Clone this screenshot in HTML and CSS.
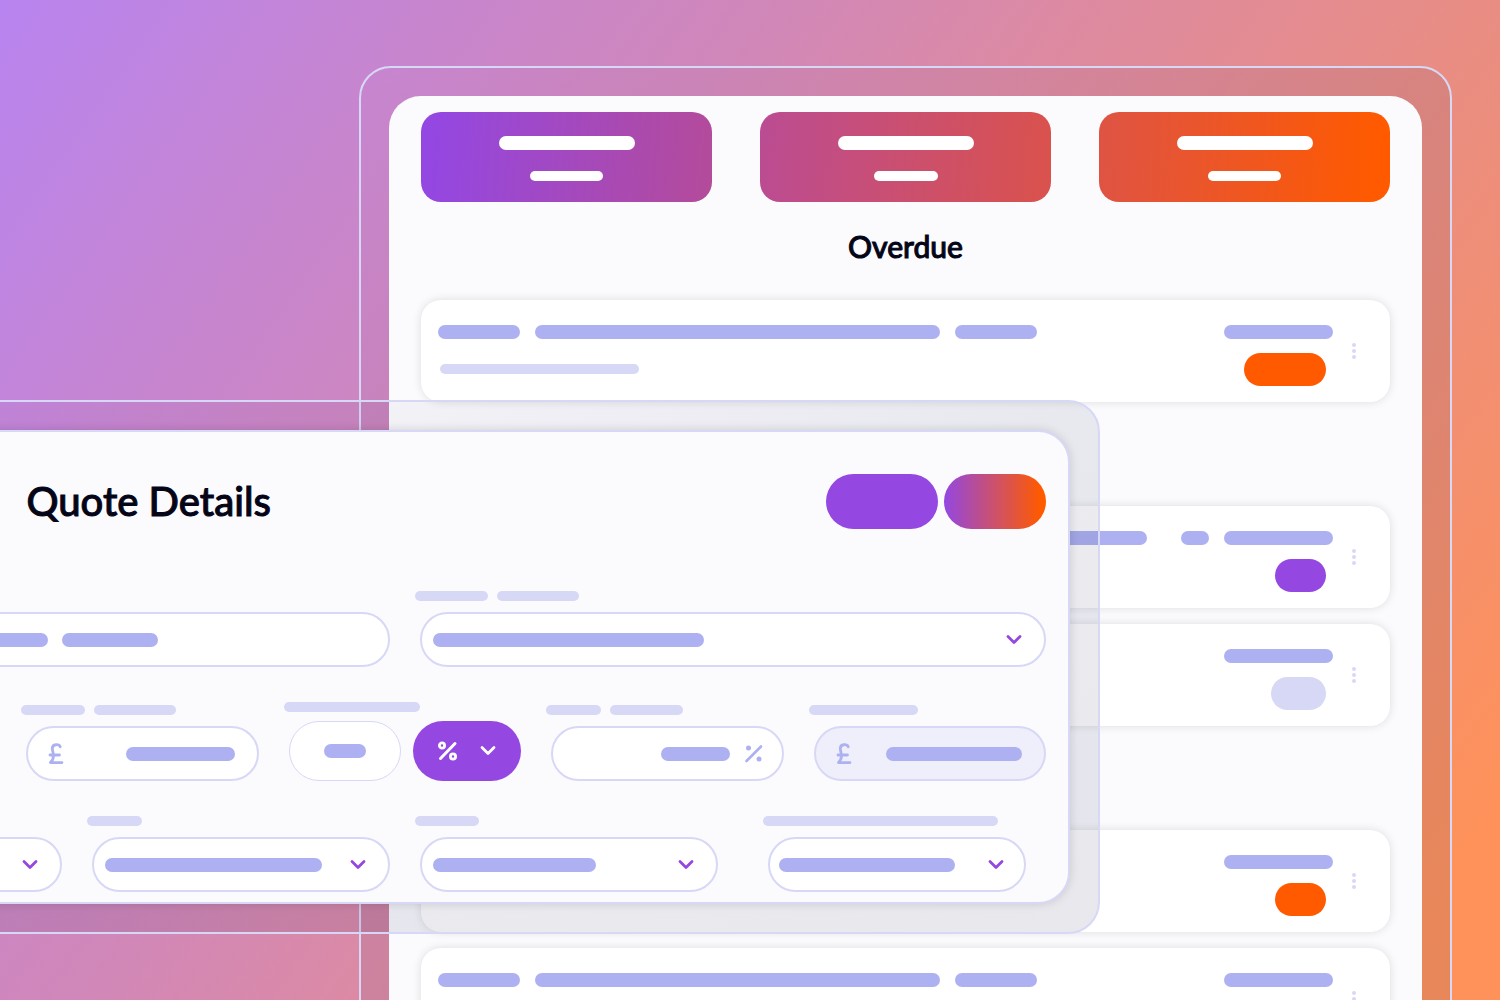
FILE: index.html
```html
<!DOCTYPE html>
<html lang="en">
<head>
<meta charset="utf-8">
<meta name="viewport" content="width=device-width, initial-scale=1">
<title>Quotes</title>
<link rel="stylesheet" href="styles.css">
</head>
<body>
<svg class="sprite" aria-hidden="true">
  <symbol id="chevron" viewBox="0 0 16 16"><path d="M2 4.500 8 10.500 14 4.500" fill="none" stroke="currentColor" stroke-width="2.800" stroke-linecap="round" stroke-linejoin="round"/></symbol>
  <symbol id="pound" viewBox="0 0 16 22"><path d="M12.200 3.700C11 1 4.300 0.600 4.300 5.600c0 2.500 1.200 4 1.200 7 0 3-1 5-3 7H14M2 12H11.500" fill="none" stroke="currentColor" stroke-width="2.800" stroke-linecap="round" stroke-linejoin="round"/></symbol>
  <symbol id="percent" viewBox="0 0 20 20"><path d="M2.500 17 17 2.500" stroke="currentColor" stroke-width="2.600" stroke-linecap="round"/><circle cx="4.500" cy="4" r="2.500" fill="currentColor"/><circle cx="15" cy="15" r="2.500" fill="currentColor"/></symbol>
  <symbol id="percent-bold" viewBox="0 0 20 20"><path d="M2.500 17.500 17 2.500" stroke="currentColor" stroke-width="3" stroke-linecap="round"/><g fill="none" stroke="currentColor" stroke-width="2.800"><circle cx="4" cy="4.500" r="2.600"/><circle cx="15" cy="15.500" r="2.600"/></g></symbol>
  <symbol id="kebab" viewBox="0 0 4 16"><g fill="currentColor"><circle cx="2" cy="2" r="2"/><circle cx="2" cy="8" r="2"/><circle cx="2" cy="14" r="2"/></g></symbol>
</svg>

<main class="desktop">
  <section class="frame frame-list">
    <div class="panel panel-list">
      <div class="stats">
        <div class="stat stat-a"><span class="bar w136"></span><span class="bar thin w73"></span></div>
        <div class="stat stat-b"><span class="bar w136"></span><span class="bar thin w64"></span></div>
        <div class="stat stat-c"><span class="bar w136"></span><span class="bar thin w73"></span></div>
      </div>
      <h2 class="list-title">Overdue</h2>
      <div class="group">
        <article class="card">
          <div class="card-main">
            <div class="line"><span class="bar w82"></span><span class="bar w405"></span><span class="bar w82"></span></div>
            <span class="bar thin soft w199 sub"></span>
          </div>
          <div class="card-side"><span class="bar w109"></span><span class="pill orange w82"></span></div>
          <button class="more" aria-label="More"><svg class="dots"><use href="#kebab"/></svg></button>
        </article>
      </div>
      <div class="group">
        <article class="card">
          <div class="card-main wide">
            <div class="line"><span class="bar w82"></span><span class="bar grow"></span></div>
          </div>
          <div class="card-side"><div class="line"><span class="bar w28"></span><span class="bar w109"></span></div><span class="pill purple w51"></span></div>
          <button class="more" aria-label="More"><svg class="dots"><use href="#kebab"/></svg></button>
        </article>
        <article class="card">
          <div class="card-main"><div class="line"><span class="bar w82"></span><span class="bar w405"></span></div></div>
          <div class="card-side"><span class="bar w109"></span><span class="pill soft w55"></span></div>
          <button class="more" aria-label="More"><svg class="dots"><use href="#kebab"/></svg></button>
        </article>
      </div>
      <div class="group">
        <article class="card">
          <div class="card-main"><div class="line"><span class="bar w82"></span><span class="bar w405"></span></div></div>
          <div class="card-side"><span class="bar w109"></span><span class="pill orange w51"></span></div>
          <button class="more" aria-label="More"><svg class="dots"><use href="#kebab"/></svg></button>
        </article>
        <article class="card">
          <div class="card-main">
            <div class="line"><span class="bar w82"></span><span class="bar w405"></span><span class="bar w82"></span></div>
            <span class="bar thin soft w199 sub"></span>
          </div>
          <div class="card-side"><span class="bar w109"></span><span class="pill orange w82"></span></div>
          <button class="more" aria-label="More"><svg class="dots"><use href="#kebab"/></svg></button>
        </article>
      </div>
    </div>
  </section>

  <section class="frame frame-quote">
    <form class="panel panel-quote">
      <header class="row cols-5 quote-head">
        <h1 class="quote-title">Quote Details</h1>
        <div class="actions">
          <button type="button" class="action action-solid" aria-label="Preview"></button>
          <button type="button" class="action action-blend" aria-label="Save"></button>
        </div>
      </header>

      <div class="row cols-2">
        <div class="field">
          <label class="caption" for="customer"><span class="bar thin soft w73"></span></label>
          <div class="box">
            <input class="control" id="customer">
            <span class="inside"><span class="bar w271"></span><span class="bar w96"></span></span>
          </div>
        </div>
        <div class="field">
          <label class="caption" for="site"><span class="bar thin soft w73"></span><span class="bar thin soft w82"></span></label>
          <div class="box">
            <select class="control" id="site"></select>
            <span class="inside"><span class="bar w271"></span><svg class="chevron end"><use href="#chevron"/></svg></span>
          </div>
        </div>
      </div>

      <div class="row cols-5">
        <div class="field">
          <label class="caption" for="quantity"><span class="bar thin soft w64"></span></label>
          <div class="box"><input class="control" id="quantity"></div>
        </div>
        <div class="field">
          <label class="caption" for="price"><span class="bar thin soft w64"></span><span class="bar thin soft w82"></span></label>
          <div class="box">
            <input class="control" id="price">
            <span class="inside money"><svg class="pound"><use href="#pound"/></svg><span class="bar w109 end"></span></span>
          </div>
        </div>
        <div class="field field-tall">
          <label class="caption" for="discount"><span class="bar thin soft w136"></span></label>
          <div class="pair">
            <div class="box">
              <input class="control control-tall" id="discount">
              <span class="inside centre"><span class="bar w42"></span></span>
            </div>
            <button type="button" class="unit" aria-label="Discount unit"><svg class="percent"><use href="#percent-bold"/></svg><svg class="chevron"><use href="#chevron"/></svg></button>
          </div>
        </div>
        <div class="field">
          <label class="caption" for="tax"><span class="bar thin soft w55"></span><span class="bar thin soft w73"></span></label>
          <div class="box">
            <input class="control" id="tax">
            <span class="inside rate"><span class="bar w69 end"></span><svg class="percent"><use href="#percent"/></svg></span>
          </div>
        </div>
        <div class="field">
          <label class="caption" for="total"><span class="bar thin soft w109"></span></label>
          <div class="box">
            <input class="control control-locked" id="total" readonly>
            <span class="inside money"><svg class="pound"><use href="#pound"/></svg><span class="bar w136 end"></span></span>
          </div>
        </div>
      </div>

      <div class="row cols-4">
        <div class="field">
          <label class="caption" for="status"><span class="bar thin soft w73"></span></label>
          <div class="box">
            <select class="control" id="status"></select>
            <span class="inside"><span class="bar w109"></span><svg class="chevron end"><use href="#chevron"/></svg></span>
          </div>
        </div>
        <div class="field">
          <label class="caption" for="owner"><span class="bar thin soft w55"></span></label>
          <div class="box">
            <select class="control" id="owner"></select>
            <span class="inside"><span class="bar w217"></span><svg class="chevron end"><use href="#chevron"/></svg></span>
          </div>
        </div>
        <div class="field">
          <label class="caption" for="terms"><span class="bar thin soft w64"></span></label>
          <div class="box">
            <select class="control" id="terms"></select>
            <span class="inside"><span class="bar w163"></span><svg class="chevron end"><use href="#chevron"/></svg></span>
          </div>
        </div>
        <div class="field field-inset">
          <label class="caption" for="template"><span class="bar thin soft w235"></span></label>
          <div class="box">
            <select class="control" id="template"></select>
            <span class="inside snug"><span class="bar w176"></span><svg class="chevron end"><use href="#chevron"/></svg></span>
          </div>
        </div>
      </div>
    </form>
  </section>
</main>
</body>
</html>
```
FILE: styles.css
```css
:root {
  --purple: #9447e1;
  --orange: #ff5a00;
  --bar: #aeb1f1;
  --soft: #d7d8f6;
  --surface: #fbfbfe;
  --ink: #040517;
}

* { box-sizing: border-box; }

body {
  margin: 0;
  font-family: Lato, "Open Sans", sans-serif;
  color: var(--ink);
}

button, input, select { font: inherit; margin: 0; padding: 0; }
button { border: 0; background: none; }
svg { display: block; flex: none; }
.sprite { position: absolute; width: 0; height: 0; }

.desktop {
  position: relative;
  height: 100vh;
  overflow: hidden;
  background: linear-gradient(125deg, #b884f0 0%, #c685d1 18%, #d087b9 35%, #dc8aa4 48%, #e98d83 68%, #ff925a 94%);
}

/* Windows */
.frame {
  position: absolute;
  padding: 28px;
  border: 2px solid var(--soft);
  border-radius: 32px;
  background: linear-gradient(to bottom right, rgba(40, 40, 90, 0), rgba(40, 40, 90, 0.09) 50%, rgba(40, 40, 90, 0.11));
}
.frame-list { top: 66px; left: 359px; right: 48px; }
.frame-quote { top: 400px; left: -290px; right: 400px; }

.panel { background: var(--surface); }
.panel-list { padding: 16px 32px; border-radius: 32px; }
.panel-quote {
  padding: 42px 22px 10px;
  border: 2px solid var(--soft);
  border-radius: 32px;
  box-shadow: 0 0 10px rgba(0, 0, 0, 0.14);
}

/* Placeholder bars */
.bar {
  display: block;
  height: 14px;
  border-radius: 7px;
  background: var(--bar);
}
.thin { height: 10px; border-radius: 5px; }
.soft { background: var(--soft); }
.grow { flex: 1; }
.w28 { width: 28px; }
.w42 { width: 42px; }
.w51 { width: 51px; }
.w55 { width: 55px; }
.w64 { width: 64px; }
.w69 { width: 69px; }
.w73 { width: 73px; }
.w82 { width: 82px; }
.w96 { width: 96px; }
.w109 { width: 109px; }
.w136 { width: 136px; }
.w163 { width: 163px; }
.w176 { width: 176px; }
.w199 { width: 199px; }
.w217 { width: 217px; }
.w235 { width: 235px; }
.w271 { width: 271px; }
.w405 { width: 405px; }

/* Summary tiles */
.stats { display: grid; grid-template-columns: repeat(3, 1fr); gap: 48px; }
.stat {
  display: flex;
  flex-direction: column;
  align-items: center;
  gap: 21px;
  height: 90px;
  padding-top: 24px;
  border-radius: 20px;
}
.stat .bar { background: #fff; }
.stat-a { background: linear-gradient(94deg, #9447e1 5%, #b44b9a); }
.stat-b { background: linear-gradient(94deg, #bb4c93, #da524c); }
.stat-c { background: linear-gradient(94deg, #de5344, #ff5a00 95%); }

.list-title, .quote-title {
  margin: 0;
  font-weight: 500;
  -webkit-text-stroke: 1px currentColor;
}
.list-title {
  height: 98px;
  font-size: 30px;
  line-height: 88px;
  text-align: center;
}

/* List cards */
.group { display: grid; gap: 16px; }
.group + .group { margin-top: 104px; }
.card {
  display: flex;
  align-items: flex-start;
  height: 102px;
  padding: 25px 29px 16px 17px;
  border-radius: 20px;
  background: #fff;
  box-shadow: 0 0 10px rgba(0, 0, 0, 0.12);
}
.card-main { flex: 1; }
.wide { margin-right: 34px; }
.line { display: flex; gap: 15px; }
.sub { margin: 25px 0 0 2px; }
.card-side { display: flex; flex-direction: column; align-items: flex-end; gap: 14px; }
.pill { height: 33px; margin-right: 7px; border-radius: 17px; }
.orange { background: var(--orange); }
.purple { background: var(--purple); }
.more { margin: 14px 0 0 14px; padding: 4px 5px; color: var(--soft); }
.dots { width: 4px; height: 16px; }

/* Quote form */
.row { display: grid; column-gap: 30px; align-items: end; margin-bottom: 35px; }
.row:last-child { margin-bottom: 0; }
.cols-2 { grid-template-columns: repeat(2, 1fr); }
.cols-4 { grid-template-columns: repeat(4, 1fr); }
.cols-5 { grid-template-columns: repeat(5, 1fr); }

.quote-head { align-items: center; margin-bottom: 62px; }
.quote-title {
  grid-column: 2 / 4;
  font-size: 40px;
  line-height: 55px;
}
.actions { grid-column: 4 / 6; display: flex; justify-content: flex-end; gap: 6px; }
.action { height: 55px; border-radius: 28px; }
.action-solid { width: 112px; background: var(--purple); }
.action-blend { width: 102px; background: linear-gradient(90deg, var(--purple), var(--orange) 95%); }

.caption { display: flex; gap: 9px; margin: 0 0 11px -5px; }
.field-tall .caption { margin-bottom: 9px; }
.field-inset { margin: 0 20px; }

.box { display: grid; flex: 1; }
.box > * { grid-area: 1 / 1; min-width: 0; }
.control {
  width: 100%;
  height: 55px;
  border: 2px solid var(--soft);
  border-radius: 28px;
  background: #fff;
  appearance: none;
}
.control-tall { height: 60px; border-width: 1px; border-radius: 30px; }
.control-locked { background: #efeffb; }
.inside {
  display: flex;
  align-items: center;
  gap: 14px;
  padding: 0 24px 0 13px;
  pointer-events: none;
}
.end { margin-left: auto; }
.centre { justify-content: center; padding: 0; }
.snug { padding: 0 22px 0 11px; }
.money { padding-left: 22px; color: var(--bar); }
.rate { padding-right: 20px; color: var(--bar); }
.chevron { width: 16px; height: 16px; color: var(--purple); }
.pound { width: 16px; height: 22px; }
.percent { width: 20px; height: 20px; }

.pair { display: flex; gap: 12px; }
.unit {
  display: flex;
  align-items: center;
  justify-content: center;
  gap: 22px;
  width: 108px;
  height: 60px;
  border-radius: 30px;
  background: var(--purple);
  color: #fff;
}
.unit .chevron { color: inherit; }
```
